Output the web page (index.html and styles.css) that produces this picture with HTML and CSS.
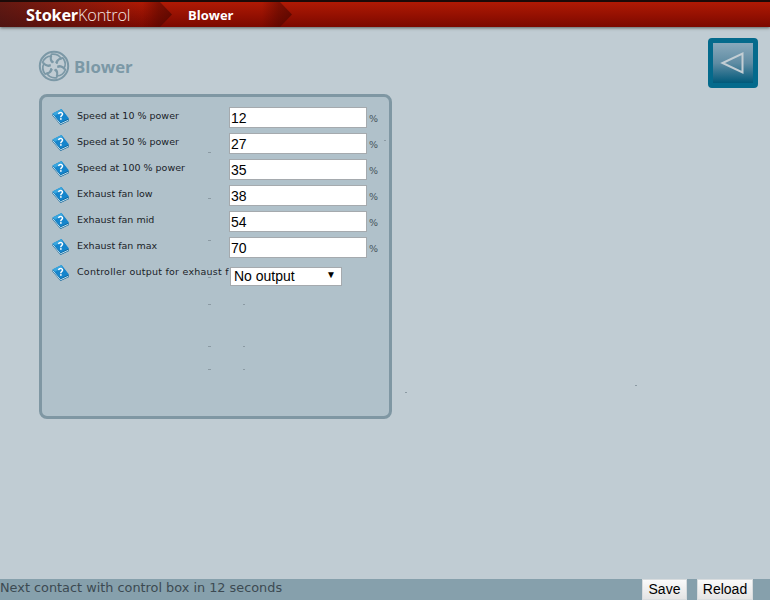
FILE: index.html
```html
<!DOCTYPE html>
<html lang="en">
<head>
<meta charset="utf-8">
<title>Blower</title>
<link rel="stylesheet" href="styles.css">
</head>
<body>
<svg class="defs" width="0" height="0" aria-hidden="true">
  <symbol id="book" viewBox="0 0 18 16">
    <path d="M0.500 5L9.500 0.500L17 10.500V12L8.500 16L0.500 6.500Z" fill="#0a5f96"/>
    <path d="M1 5.800L8.500 14.800L16.500 11.200" fill="none" stroke="#bfe3f2" stroke-width="1"/>
    <path d="M0.500 4.500L9.500 0L17 9.500L8.500 13.800Z" fill="#1585cc"/>
    <path d="M0.500 4.500L9.500 0L11 2.200L3 6.800Z" fill="#3aa6de"/>
    <path d="M6.500 5.200C7 3 10.700 3 10.500 5.200C10.300 6.600 8.800 6.600 8.800 8.200" fill="none" stroke="#fff" stroke-width="1.500"/>
    <rect x="8" y="9.200" width="1.700" height="1.500" fill="#fff"/>
  </symbol>
  <symbol id="blade" viewBox="0 0 32 32" overflow="visible">
    <path d="M15.500 12.500C13 10.500 11.800 7.500 13.500 4.200C17.500 3.800 21.500 5.500 23.200 8.800C20.500 9 18.500 10.200 18 13.200" fill="none" stroke="#7b98a6" stroke-width="1.700" stroke-linejoin="round"/>
  </symbol>
</svg>
<header class="topbar">
  <div class="crumb crumb-logo"><span class="logo"><b>Stoker</b>Kontrol</span></div>
  <div class="crumb crumb-page"><span class="crumb-title">Blower</span></div>
</header>
<main class="content">
  <div class="title-row">
    <div class="heading">
      <svg class="fan" viewBox="0 0 32 32" width="32" height="32" aria-hidden="true">
        <circle cx="16" cy="16" r="14.200" fill="none" stroke="#7b98a6" stroke-width="2"/>
        <use href="#blade" width="32" height="32"/>
        <use href="#blade" width="32" height="32" transform="rotate(60 16 16)"/>
        <use href="#blade" width="32" height="32" transform="rotate(120 16 16)"/>
        <use href="#blade" width="32" height="32" transform="rotate(180 16 16)"/>
        <use href="#blade" width="32" height="32" transform="rotate(240 16 16)"/>
        <use href="#blade" width="32" height="32" transform="rotate(300 16 16)"/>
      </svg>
      <h1 class="heading-text">Blower</h1>
    </div>
    <a class="back" href="#" aria-label="Back">
      <svg viewBox="0 0 40 40" width="40" height="40" aria-hidden="true">
        <path d="M29.500 10.500V29.500L9.500 20Z" fill="none" stroke="#c3ced4" stroke-width="2"/>
      </svg>
    </a>
  </div>
  <section class="panel">
    <div class="row">
      <svg class="help" width="18" height="16" aria-hidden="true"><use href="#book"/></svg>
      <label class="label">Speed at 10 % power</label>
      <input class="field" type="text" value="12"><span class="unit">%</span>
    </div>
    <div class="row">
      <svg class="help" width="18" height="16" aria-hidden="true"><use href="#book"/></svg>
      <label class="label">Speed at 50 % power</label>
      <input class="field" type="text" value="27"><span class="unit">%</span>
    </div>
    <div class="row">
      <svg class="help" width="18" height="16" aria-hidden="true"><use href="#book"/></svg>
      <label class="label">Speed at 100 % power</label>
      <input class="field" type="text" value="35"><span class="unit">%</span>
    </div>
    <div class="row">
      <svg class="help" width="18" height="16" aria-hidden="true"><use href="#book"/></svg>
      <label class="label">Exhaust fan low</label>
      <input class="field" type="text" value="38"><span class="unit">%</span>
    </div>
    <div class="row">
      <svg class="help" width="18" height="16" aria-hidden="true"><use href="#book"/></svg>
      <label class="label">Exhaust fan mid</label>
      <input class="field" type="text" value="54"><span class="unit">%</span>
    </div>
    <div class="row">
      <svg class="help" width="18" height="16" aria-hidden="true"><use href="#book"/></svg>
      <label class="label">Exhaust fan max</label>
      <input class="field" type="text" value="70"><span class="unit">%</span>
    </div>
    <div class="row">
      <svg class="help" width="18" height="16" aria-hidden="true"><use href="#book"/></svg>
      <label class="label label-long">Controller output for exhaust f</label>
      <div class="select"><span>No output</span><span class="caret">▼</span></div>
    </div>
  </section>
</main>
<footer class="statusbar">
  <span class="status">Next contact with control box in 12 seconds</span>
  <div class="actions">
    <button class="btn btn-save" type="button">Save</button>
    <button class="btn btn-reload" type="button">Reload</button>
  </div>
</footer>
<svg class="specks" width="770" height="600" aria-hidden="true">
  <path d="M208 152.500h3M208 198.500h3M208 240.500h3M208 277.500h3M208 304.500h3M243 304.500h2M208 346.500h3M243 346.500h2M208 369.500h3M243 369.500h2M384 140.500h2M405 392.500h2M635 385.500h2" stroke="#8b9aa3" stroke-width="1" fill="none"/>
</svg>
</body>
</html>
```

FILE: styles.css
```css
* { box-sizing: border-box; }
html, body { height: 100%; }
body {
  margin: 0;
  height: 600px;
  overflow: hidden;
  display: flex;
  flex-direction: column;
  position: relative;
  background: #c0ccd3;
  font-family: "DejaVu Sans", sans-serif;
}
.defs { position: absolute; }
.specks { position: absolute; left: 0; top: 0; pointer-events: none; }
.topbar {
  flex: none;
  height: 27px;
  display: flex;
  border-top: 2px solid #1c0a08;
  background: linear-gradient(#b01a04, #7c0800);
  box-shadow: 0 1px 3px rgba(60, 60, 60, 0.75);
}
.crumb {
  position: relative;
  height: 25px;
  display: flex;
  align-items: center;
}
.crumb::after {
  content: "";
  position: absolute;
  right: 0;
  top: 0;
  width: 30px;
  height: 25px;
  background: linear-gradient(90deg, rgba(70, 5, 0, 0), rgba(70, 5, 0, 0.45) 55%, rgba(70, 5, 0, 0.65));
  clip-path: polygon(0 0, 60% 0, 100% 50%, 60% 100%, 0 100%);
}
.crumb-logo {
  width: 172px;
  padding-left: 26px;
  background: linear-gradient(75deg, rgba(60, 25, 25, 0.7), rgba(60, 25, 25, 0) 85%);
}
.crumb-page {
  width: 120px;
  padding-left: 16px;
}
.logo {
  font-family: "Open Sans", sans-serif;
  font-size: 16.300px;
  font-weight: 300;
  color: #f3e6e2;
  letter-spacing: -0.2px;
  position: relative;
  z-index: 1;
}
.logo b { font-weight: 700; color: #fff; }
.crumb-title {
  font-family: "Open Sans", sans-serif;
  font-weight: 700;
  font-size: 13px;
  color: #fff;
}
.content {
  flex: 1;
  padding: 11px 12px 0 39px;
}
.title-row {
  height: 56px;
  display: flex;
  justify-content: space-between;
  align-items: flex-start;
}
.heading {
  display: flex;
  align-items: center;
  gap: 4px;
  margin-top: 12px;
  margin-left: -1px;
}
.fan { display: block; }
.heading-text {
  margin: 0;
  font-family: "Open Sans", sans-serif;
  font-weight: 700;
  font-size: 16.800px;
  color: #7b98a6;
}
.back {
  width: 50px;
  height: 50px;
  display: block;
  border: 5px solid #046a8c;
  border-radius: 4px;
  background: linear-gradient(#8aa9bc, #5f8ca3 50%, #00597a);
}
.back svg { display: block; }
.panel {
  width: 353px;
  height: 325px;
  border: 3px solid #7f97a3;
  border-radius: 8px;
  background: #b0c1ca;
  padding: 10px 0 0 10px;
  display: flex;
  flex-direction: column;
  gap: 5px;
}
.row {
  height: 21px;
  display: flex;
  align-items: flex-start;
}
.help { margin-top: 2px; flex: none; display: block; }
.label {
  width: 152px;
  margin-left: 7px;
  margin-top: 1px;
  flex: none;
  font-size: 9.500px;
  line-height: 15px;
  color: #1a2228;
  white-space: nowrap;
}
.label-long { letter-spacing: 0.24px; }
.field {
  width: 138px;
  height: 21px;
  margin: 0;
  padding: 0 1px;
  border: 1px solid #a5aaae;
  border-radius: 0;
  background: #fff;
  font-family: "Liberation Sans", sans-serif;
  font-size: 14px;
  color: #000;
  outline: none;
}
.unit {
  margin: 4px 0 0 2px;
  font-size: 9.500px;
  line-height: 15px;
  color: #46545c;
}
.select {
  width: 112px;
  height: 19px;
  margin-top: 4px;
  margin-left: 1px;
  padding: 0 4px 0 3px;
  display: flex;
  justify-content: space-between;
  border: 1px solid #a5aaae;
  background: #fff;
  font-family: "Liberation Sans", sans-serif;
  font-size: 14px;
  line-height: 17px;
  color: #000;
  position: relative;
}
.caret { font-size: 10px; line-height: 14px; padding-right: 1px; }
.statusbar {
  flex: none;
  height: 21px;
  display: flex;
  justify-content: space-between;
  background: #86a0ac;
}
.status {
  font-size: 12.850px;
  line-height: 18px;
  color: #3c4a52;
}
.actions {
  display: flex;
  gap: 10px;
  padding: 0 17px 0 0;
}
.btn {
  height: 21px;
  padding: 0 0 2px;
  border: 1px solid #d8dcde;
  border-radius: 0;
  background: linear-gradient(#fafafa, #e4e4e4);
  font-family: "Liberation Sans", sans-serif;
  font-size: 14px;
  color: #000;
}
.btn-save { width: 45px; }
.btn-reload { width: 56px; }
```
